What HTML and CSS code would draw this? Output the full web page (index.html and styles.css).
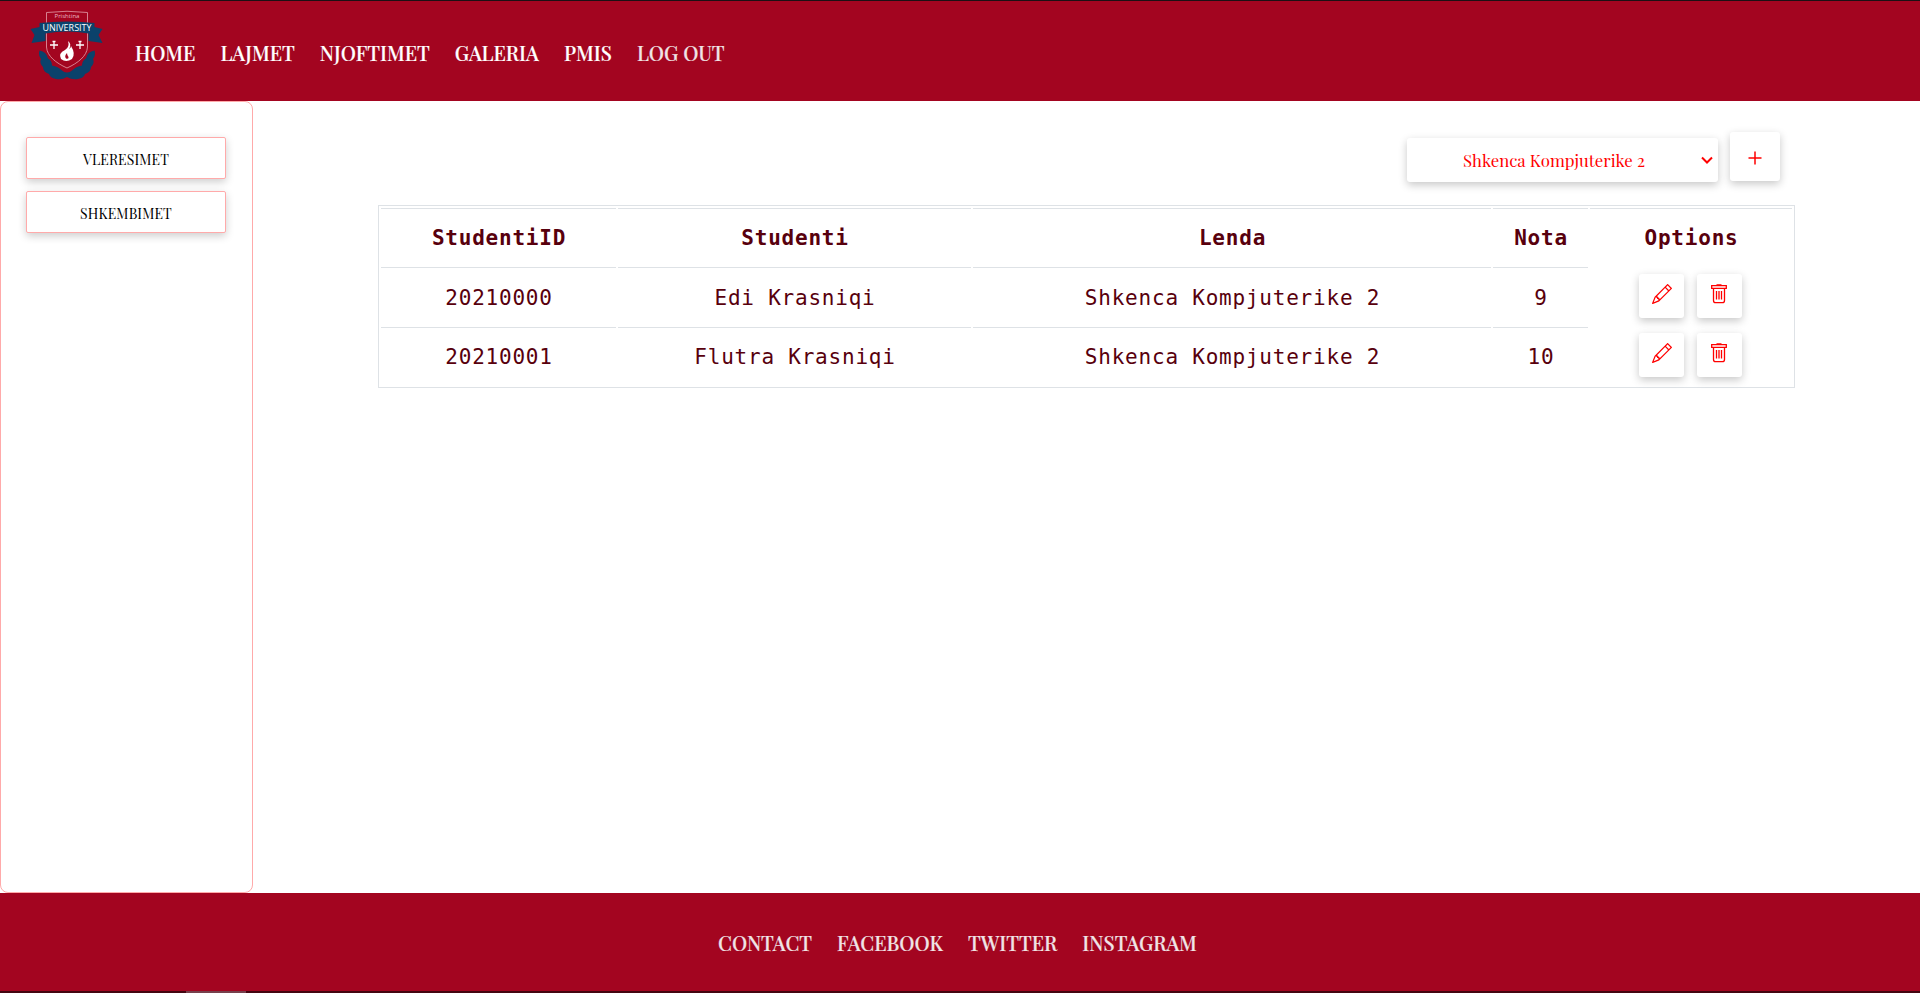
FILE: index.html
```html
<!DOCTYPE html>
<html lang="sq">
<head>
<meta charset="utf-8">
<title>Vleresimet</title>
<link rel="stylesheet" href="styles.css">
</head>
<body>
<svg class="defs" width="0" height="0">
  <symbol id="pencil" viewBox="0 0 16 16"><path d="M12.146.146a.5.5 0 0 1 .708 0l3 3a.5.5 0 0 1 0 .708l-10 10a.5.5 0 0 1-.168.11l-5 2a.5.5 0 0 1-.65-.65l2-5a.5.5 0 0 1 .11-.168l10-10zM11.207 2.5 13.5 4.793 14.793 3.5 12.5 1.207 11.207 2.5zm1.586 3L10.5 3.207 4 9.707V10h.5a.5.5 0 0 1 .5.5v.5h.5a.5.5 0 0 1 .5.5v.5h.293l6.5-6.5zm-9.761 5.175-.106.106-1.528 3.821 3.821-1.528.106-.106A.5.5 0 0 1 5 12.5V12h-.5a.5.5 0 0 1-.5-.5V11h-.5a.5.5 0 0 1-.468-.325z"/></symbol>
  <symbol id="trash" viewBox="0 0 20 20"><path d="M2.700 1.700h14.600v2.600H2.700zM4.500 4.300v12.200q0 2.200 2.200 2.200h6.600q2.200 0 2.200-2.200V4.300M7.500 7v8.500M10 7v8.500M12.500 7v8.500M7.500 1h5" fill="none" stroke="red" stroke-width="1.300"/></symbol>
</svg>
<header class="header">
  <svg class="logo" viewBox="28 8 78 76">
    <path class="navy" d="M39.500 50.500Q38 55 41 59q-2 4 2 8 0 5 6 7 1 4 7 5 6 1 11-2 5 3 11 2 6-1 7-5 6-2 6-7 4-4 2-8 3-4 1.500-8.500-7 1-8.500 8-4 2-4 7-6 1-10 5-2 2-5 2t-5-2q-4-4-10-5 0-5-4-7-1.500-7-8.500-8z"/>
    <path class="shield" d="M46.500 12.500Q67 10 87.500 12.500V47C87 56 78 63 67 68 56 63 47 56 46.500 47z"/>
    <path class="navy" d="M30.500 29l9-2v-4q27.500-3 55 0v4l8 2-4 6 4 8-14-2v-7.500q-21.500-4-43 0V41l-14 2 3-8z"/>
    <text class="logo-small" x="67" y="18" textLength="25" lengthAdjust="spacingAndGlyphs">Prishtina</text>
    <text class="logo-name" x="67" y="31" textLength="49" lengthAdjust="spacingAndGlyphs">UNIVERSITY</text>
    <path class="cross" d="M54 41v8M50 45h8M52.500 41.500h3M80 41v8M76 45h8M78.500 41.500h3"/>
    <path class="flame" d="M68 41q4 3 1 8 2-1 2-3 5 8 1 13-6 4-11 0-3-6 4-9 5-3 3-9z"/>
    <path class="flame-core" d="M67 53q-3 3-1 5.500 3 1 2.500-1.500-1.500-2-1.500-4z"/>
  </svg>
  <nav class="nav">
    <a>HOME</a><a>LAJMET</a><a>NJOFTIMET</a><a>GALERIA</a><a>PMIS</a><a class="muted">LOG OUT</a>
  </nav>
</header>
<div class="main">
  <aside class="sidebar">
    <button class="side-btn">VLERESIMET</button>
    <button class="side-btn">SHKEMBIMET</button>
  </aside>
  <main class="content">
    <div class="toolbar">
      <div class="select"><span class="select-label">Shkenca Kompjuterike 2</span>
        <svg class="chevron" viewBox="0 0 12 8"><path d="M1 1.500l5 5 5-5"/></svg></div>
      <button class="add"><svg viewBox="0 0 14 14"><path d="M7 .5v13M.5 7h13"/></svg></button>
    </div>
    <table class="grades">
      <colgroup><col class="c-id"><col class="c-name"><col class="c-course"><col class="c-grade"><col class="c-opt"></colgroup>
      <tr class="head"><th>StudentiID</th><th>Studenti</th><th>Lenda</th><th>Nota</th><th>Options</th></tr>
      <tr><td>20210000</td><td>Edi Krasniqi</td><td>Shkenca Kompjuterike 2</td><td>9</td><td class="options"><div class="actions"><button class="act"><svg><use href="#pencil"/></svg></button><button class="act trash"><svg><use href="#trash"/></svg></button></div></td></tr>
      <tr class="last"><td>20210001</td><td>Flutra Krasniqi</td><td>Shkenca Kompjuterike 2</td><td>10</td><td class="options"><div class="actions"><button class="act"><svg><use href="#pencil"/></svg></button><button class="act trash"><svg><use href="#trash"/></svg></button></div></td></tr>
    </table>
  </main>
</div>
<footer class="footer">
  <nav class="nav muted">
    <a>CONTACT</a><a>FACEBOOK</a><a>TWITTER</a><a>INSTAGRAM</a>
  </nav>
</footer>
<div class="strip"><div class="thumb"></div></div>
</body>
</html>
```

FILE: styles.css
```css
* { box-sizing: border-box; }
body {
  margin: 0;
  height: 993px;
  display: flex;
  flex-direction: column;
  overflow: hidden;
  background: #fff;
  font-family: "Playfair Display", "Liberation Serif", serif;
}
button { padding: 0; font-family: inherit; background: #fff; }
.defs { display: none; }

.header {
  height: 101px;
  flex: none;
  display: flex;
  align-items: flex-start;
  padding-left: 28px;
  background: #a30520;
  border-top: 1px solid #1c1014;
}
.logo { width: 78px; height: 76px; margin-top: 7px; flex: none; }
.navy { fill: #0b426b; }
.shield { fill: #a30520; stroke: #dc8f9c; stroke-width: .9; }
.cross { fill: none; stroke: #fff; stroke-width: 1.3; }
.flame { fill: #fff; }
.flame-core { fill: #a30520; }
.logo-small, .logo-name { font-family: "Open Sans", sans-serif; text-anchor: middle; }
.logo-small { font-size: 6px; fill: #e9b9c1; }
.logo-name { font-size: 9px; fill: #fff; }

.nav { display: flex; gap: 25px; font-size: 20px; font-weight: 500; line-height: 28px; color: #fff; }
.nav a { white-space: nowrap; flex: none; -webkit-text-stroke: .2px currentColor; }
.header .nav { margin: 38px 0 0 29px; }
.nav.muted, .nav .muted { color: #f0e4e6; }

.main { height: 792px; flex: none; display: flex; }
.sidebar {
  width: 253px;
  flex: none;
  padding: 35px 26px 0 25px;
  border: 1px solid #ffaaaa;
  border-radius: 8px;
  display: flex;
  flex-direction: column;
  gap: 12px;
}
.side-btn {
  width: 200px;
  height: 42px;
  border: 1px solid #ffaaaa;
  border-radius: 2px;
  color: #000;
  font-size: 14px;
  letter-spacing: .1px;
  padding-top: 2px;
  box-shadow: 0 3px 8px rgba(0, 0, 0, .2);
}

.content { flex: 1; padding: 31px 125px 0 125px; }
.toolbar { display: flex; justify-content: flex-end; gap: 12px; padding-right: 15px; height: 73px; }
.select, .add, .act { border: 0; border-radius: 3px; background: #fff; box-shadow: 0 3px 9px rgba(0, 0, 0, .22); }
.select {
  width: 311px;
  height: 44px;
  margin-top: 6px;
  padding: 0 5px 0 56px;
  display: flex;
  align-items: center;
  justify-content: space-between;
  color: red;
}
.select-label { font-size: 16.800px; white-space: nowrap; }
.chevron { width: 12px; height: 8px; fill: none; stroke: red; stroke-width: 2; }
.add { width: 50px; height: 49px; display: flex; justify-content: center; padding-top: 19px; }
.add svg { width: 14px; height: 14px; fill: none; stroke: red; stroke-width: 1.500; }

.grades {
  width: 1417px;
  height: 183px;
  table-layout: fixed;
  border: 1px solid #dee2e6;
  border-collapse: separate;
  border-spacing: 2px;
  color: #58000d;
  font-family: Consolas, "DejaVu Sans Mono", monospace;
  font-size: 21px;
  letter-spacing: .78px;
  text-align: center;
  line-height: 26px;
}
.c-id { width: 235px; }
.c-name { width: 353px; }
.c-course { width: 518px; }
.c-grade { width: 95px; }
.grades tr { height: 58px; }
.grades tr.head { height: 57px; }
.grades th, .grades td { padding: 2px 0 0 1px; border-top: 1px solid #dee2e6; white-space: nowrap; }
.grades .last td { padding-top: 0; }
.grades td.options { border: 0; vertical-align: top; padding: 7px 0 0; }
.grades .last td.options { padding-top: 6px; }
.actions { display: flex; gap: 13px; margin-left: 49px; }
.act { width: 45px; height: 44px; display: flex; justify-content: center; padding-top: 10px; }
.act svg { width: 20px; height: 20px; fill: red; }
.trash { padding-right: 1px; }

.footer { height: 98px; flex: none; padding: 36px 0 0 718px; background: #a30520; }
.strip { height: 2px; flex: none; padding-left: 186px; background: #430611; }
.thumb { width: 60px; height: 2px; background: #76404c; }
```
